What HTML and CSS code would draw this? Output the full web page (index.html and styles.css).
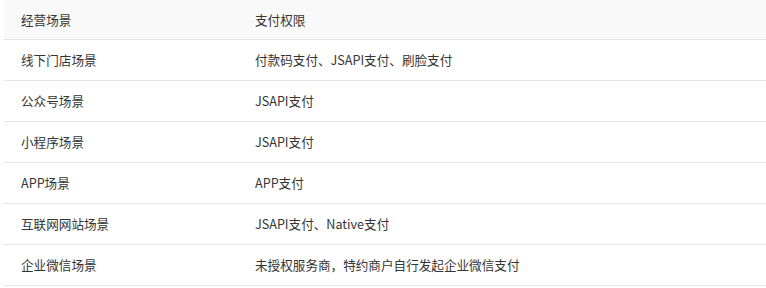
FILE: index.html
```html
<!DOCTYPE html>
<html lang="zh-CN">
<head>
<meta charset="utf-8">
<link rel="stylesheet" href="styles.css">
</head>
<body>
<table class="perm-table">
  <thead>
    <tr><th class="c1">经营场景</th><th>支付权限</th></tr>
  </thead>
  <tbody>
    <tr><td class="c1">线下门店场景</td><td>付款码支付、JSAPI支付、刷脸支付</td></tr>
    <tr><td class="c1">公众号场景</td><td>JSAPI支付</td></tr>
    <tr><td class="c1">小程序场景</td><td>JSAPI支付</td></tr>
    <tr><td class="c1">APP场景</td><td>APP支付</td></tr>
    <tr><td class="c1">互联网网站场景</td><td>JSAPI支付、Native支付</td></tr>
    <tr><td class="c1">企业微信场景</td><td>未授权服务商，特约商户自行发起企业微信支付</td></tr>
  </tbody>
</table>
</body>
</html>
```
FILE: styles.css
```css
html, body {
  margin: 0;
  padding: 0;
  background: #fff;
}
body {
  padding-left: 4px;
  font-family: "Noto Sans CJK SC", "Noto Sans", sans-serif;
  font-size: 12.6px;
  color: #353535;
}
.perm-table {
  border-collapse: collapse;
  width: 762px;
  table-layout: fixed;
}
.perm-table th,
.perm-table td {
  text-align: left;
  font-weight: normal;
  padding: 0 17px;
  border-bottom: 1px solid #e5e5e5;
  line-height: 20px;
  white-space: nowrap;
}
.perm-table th {
  height: 39px;
  background: #f9f9f9;
}
.perm-table td {
  height: 40px;
}
.perm-table .c1 {
  width: 200px;
}
```
